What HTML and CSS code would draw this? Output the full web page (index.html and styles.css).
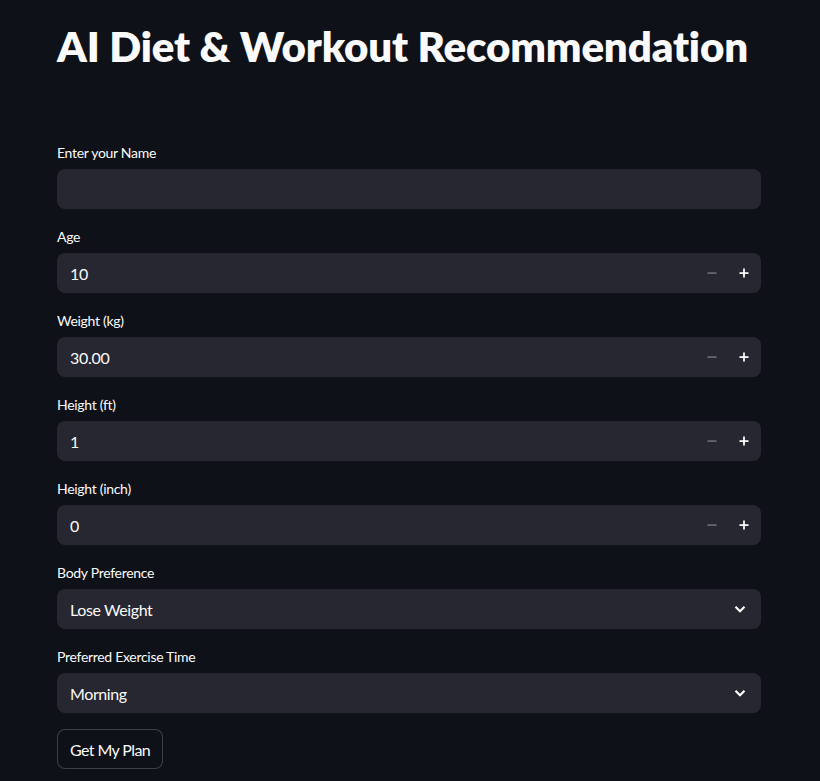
FILE: index.html
```html
<!DOCTYPE html>
<html lang="en">
<head>
<meta charset="utf-8">
<title>AI Diet & Workout Recommendation</title>
<link rel="stylesheet" href="styles.css">
</head>
<body>
<main class="main">
  <h1 class="title">AI Diet &amp; Workout Recommendation</h1>

  <div class="field">
    <label class="label">Enter your Name</label>
    <div class="box"><input class="input" type="text" value=""></div>
  </div>

  <div class="field">
    <label class="label">Age</label>
    <div class="box">
      <input class="input" type="text" value="10">
      <span class="step dim"><svg width="10" height="10" viewBox="0 0 10 10"><rect x="0.5" y="4.3" width="9" height="1.6" fill="currentColor"/></svg></span>
      <span class="step"><svg width="10" height="10" viewBox="0 0 10 10"><rect x="0.5" y="4.2" width="9" height="1.8" fill="currentColor"/><rect x="4.1" y="0.5" width="1.8" height="9" fill="currentColor"/></svg></span>
    </div>
  </div>

  <div class="field">
    <label class="label">Weight (kg)</label>
    <div class="box">
      <input class="input" type="text" value="30.00">
      <span class="step dim"><svg width="10" height="10" viewBox="0 0 10 10"><rect x="0.5" y="4.3" width="9" height="1.6" fill="currentColor"/></svg></span>
      <span class="step"><svg width="10" height="10" viewBox="0 0 10 10"><rect x="0.5" y="4.2" width="9" height="1.8" fill="currentColor"/><rect x="4.1" y="0.5" width="1.8" height="9" fill="currentColor"/></svg></span>
    </div>
  </div>

  <div class="field">
    <label class="label">Height (ft)</label>
    <div class="box">
      <input class="input" type="text" value="1">
      <span class="step dim"><svg width="10" height="10" viewBox="0 0 10 10"><rect x="0.5" y="4.3" width="9" height="1.6" fill="currentColor"/></svg></span>
      <span class="step"><svg width="10" height="10" viewBox="0 0 10 10"><rect x="0.5" y="4.2" width="9" height="1.8" fill="currentColor"/><rect x="4.1" y="0.5" width="1.8" height="9" fill="currentColor"/></svg></span>
    </div>
  </div>

  <div class="field">
    <label class="label">Height (inch)</label>
    <div class="box">
      <input class="input" type="text" value="0">
      <span class="step dim"><svg width="10" height="10" viewBox="0 0 10 10"><rect x="0.5" y="4.3" width="9" height="1.6" fill="currentColor"/></svg></span>
      <span class="step"><svg width="10" height="10" viewBox="0 0 10 10"><rect x="0.5" y="4.2" width="9" height="1.8" fill="currentColor"/><rect x="4.1" y="0.5" width="1.8" height="9" fill="currentColor"/></svg></span>
    </div>
  </div>

  <div class="field">
    <label class="label">Body Preference</label>
    <div class="box select">
      <span class="value">Lose Weight</span>
      <svg class="chev" width="14" height="14" viewBox="0 0 14 14"><path d="M2.5 4.8 L7 9.3 L11.5 4.8" fill="none" stroke="currentColor" stroke-width="2.2"/></svg>
    </div>
  </div>

  <div class="field">
    <label class="label">Preferred Exercise Time</label>
    <div class="box select">
      <span class="value">Morning</span>
      <svg class="chev" width="14" height="14" viewBox="0 0 14 14"><path d="M2.5 4.8 L7 9.3 L11.5 4.8" fill="none" stroke="currentColor" stroke-width="2.2"/></svg>
    </div>
  </div>

  <div class="actions">
    <button class="btn" type="button">Get My Plan</button>
  </div>
</main>
</body>
</html>
```

FILE: styles.css
```css
* { box-sizing: border-box; }

html, body {
  margin: 0;
  padding: 0;
  background: #0e1117;
  color: #fafafa;
  font-family: "Lato", "Liberation Sans", sans-serif;
}

.main {
  width: 704px;
  margin-left: 57px;
  padding-top: 17px;
  display: flex;
  flex-direction: column;
  gap: 16px;
}

.title {
  margin: 0 0 50px 0;
  font-size: 42px;
  font-weight: 800;
  line-height: 58px;
  letter-spacing: -0.15px;
}

.field {
  display: flex;
  flex-direction: column;
}

.label {
  font-size: 14px;
  line-height: 20px;
  height: 24px;
  margin-bottom: 4px;
  display: flex;
  align-items: center;
  letter-spacing: -0.3px;
}

.box {
  height: 40px;
  background: #262730;
  border-radius: 8px;
  display: flex;
  align-items: center;
}

.input {
  flex: 1;
  min-width: 0;
  height: 100%;
  background: transparent;
  border: none;
  outline: none;
  color: #fafafa;
  font-family: inherit;
  font-size: 16px;
  letter-spacing: -0.3px;
  padding: 0 13px;
}

.step {
  width: 32px;
  height: 100%;
  display: flex;
  align-items: center;
  justify-content: center;
  color: #fafafa;
}

.step:last-child { margin-right: 1px; }

.step.dim { color: #6d6e75; }

.select {
  justify-content: space-between;
  padding: 0 14px 0 13px;
}

.value {
  font-size: 16px;
  letter-spacing: -0.4px;
}

.chev { color: #fafafa; }

.actions {
  display: flex;
}

.btn {
  height: 40px;
  padding: 0 12px;
  border: 1px solid rgba(250, 250, 250, 0.2);
  border-radius: 8px;
  background: #0e1117;
  color: #fafafa;
  font-family: inherit;
  font-size: 16px;
  letter-spacing: -0.6px;
}
```
